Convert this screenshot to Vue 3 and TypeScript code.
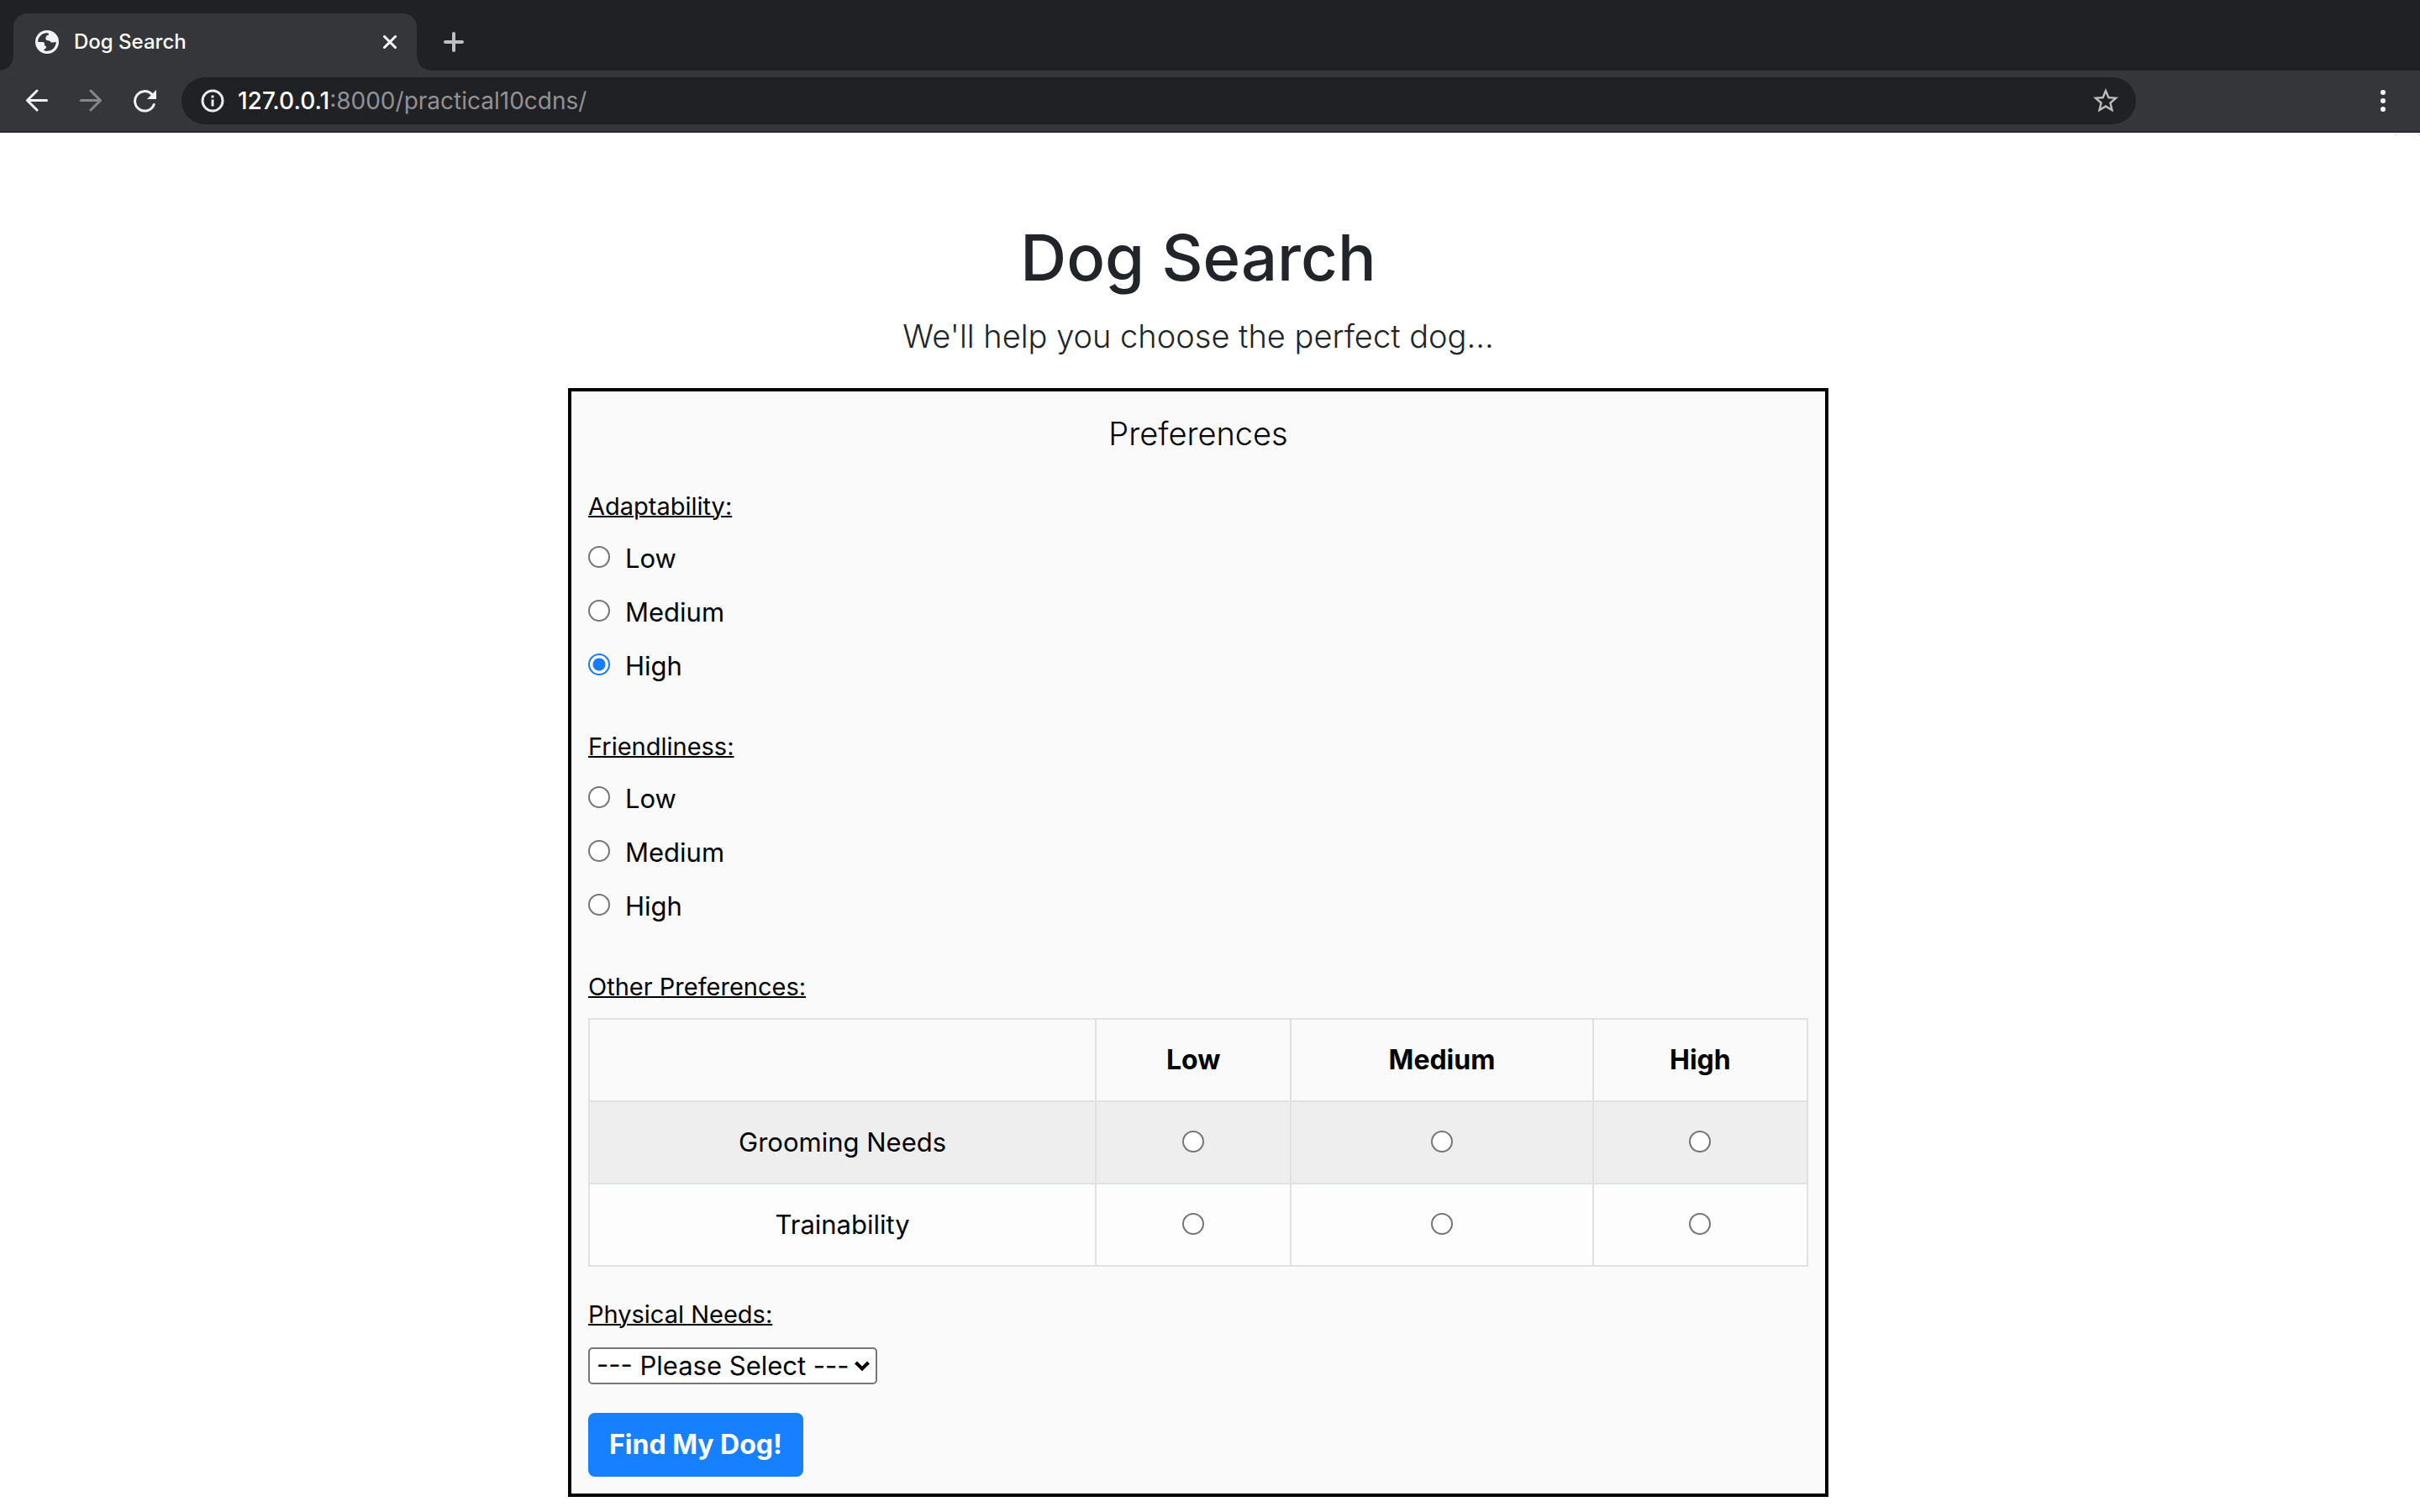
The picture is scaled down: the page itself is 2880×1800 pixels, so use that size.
<script setup lang="ts">
import { ref } from 'vue'

interface RadioGroup {
  name: string
  title: string
}

const levels: string[] = ['Low', 'Medium', 'High']

const groups: RadioGroup[] = [
  { name: 'adaptability', title: 'Adaptability:' },
  { name: 'friendliness', title: 'Friendliness:' },
]

const otherRows: RadioGroup[] = [
  { name: 'grooming', title: 'Grooming Needs' },
  { name: 'trainability', title: 'Trainability' },
]

const answers = ref<Record<string, string>>({
  adaptability: 'High',
  friendliness: '',
  grooming: '',
  trainability: '',
})

const physicalNeeds = ref<string>('')
</script>

<template>
  <div class="window">
    <header class="browser">
      <div class="tab-strip">
        <div class="tab">
          <svg class="favicon" viewBox="0 0 28 28" aria-hidden="true">
            <circle cx="14" cy="14" r="14" fill="#f1f3f4" />
            <path
              d="M3.2 14C3 8 8 3.2 14 3.2C15.500 3.300 16.500 4.300 16 5.200C15 6.200 13 6 12.800 7.800C12.600 9.200 11.800 10 12.800 11.200C14 12.500 16.200 11.800 17.500 13C18.300 14.500 19.500 14.800 21 14.500L24.800 14C24.500 20 20 24.800 14 24.800C12 24.800 10.200 24.500 10.300 23.500C10.500 22 13 22.300 13 20.500C13 19 13 18.600 11.600 18.500C10.300 18.200 11.300 16.500 11 15.500C10.500 14 9 14 8 14Z"
              fill="#35363a"
            />
          </svg>
          <span class="tab-title">Dog Search</span>
          <button class="icon-button tab-close" type="button" aria-label="Close tab">
            <svg width="16" height="16" viewBox="0 0 16 16">
              <path d="M1.500 1.500L14.500 14.500M14.500 1.500L1.500 14.500" stroke="#fff" stroke-width="3" stroke-linecap="round" />
            </svg>
          </button>
        </div>
        <button class="icon-button new-tab" type="button" aria-label="New tab">
          <svg width="24" height="24" viewBox="0 0 24 24">
            <path d="M12 2V22M2 12H22" stroke="#bdc1c6" stroke-width="4" stroke-linecap="round" />
          </svg>
        </button>
      </div>

      <div class="toolbar">
        <button class="icon-button nav" type="button" aria-label="Back">
          <svg width="28" height="28" viewBox="0 0 28 28" fill="none" stroke="#f1f3f4" stroke-width="3" stroke-linecap="round" stroke-linejoin="round">
            <path d="M25.500 13.500H2.500M14 2L2.500 13.500L14 25" />
          </svg>
        </button>
        <button class="icon-button nav" type="button" aria-label="Forward">
          <svg width="28" height="28" viewBox="0 0 28 28" fill="none" stroke="#86878a" stroke-width="3" stroke-linecap="round" stroke-linejoin="round">
            <path d="M2.500 13.500H25.500M14 2L25.500 13.500L14 25" />
          </svg>
        </button>
        <button class="icon-button nav" type="button" aria-label="Reload">
          <svg width="28" height="28" viewBox="0 0 28 28">
            <path d="M25.200 18.500A11.700 11.700 0 1 1 22.500 6" fill="none" stroke="#f1f3f4" stroke-width="3" stroke-linecap="round" />
            <path d="M28 1V12H17Z" fill="#f1f3f4" />
          </svg>
        </button>
        <div class="address">
          <svg width="28" height="28" viewBox="0 0 28 28" aria-hidden="true">
            <circle cx="14" cy="14" r="12" fill="none" stroke="#e8eaed" stroke-width="3" />
            <path d="M12.500 7.500H15.500V10.500H12.500ZM12.500 12.500H15.500V20.500H12.500Z" fill="#e8eaed" />
          </svg>
          <span class="url"><span class="host">127.0.0.1</span>:8000/practical10cdns/</span>
          <button class="icon-button" type="button" aria-label="Bookmark this page">
            <svg width="36" height="36" viewBox="0 0 24 24">
              <path
                d="M22 9.240l-7.190-.620L12 2 9.190 8.630 2 9.240l5.460 4.730L5.820 21 12 17.270 18.180 21l-1.630-7.030L22 9.240zM12 15.400l-3.760 2.270 1-4.280-3.320-2.880 4.380-.380L12 6.100l1.710 4.040 4.380.380-3.320 2.880 1 4.280L12 15.400z"
                fill="#bdbdbd"
              />
            </svg>
          </button>
        </div>
        <button class="icon-button nav" type="button" aria-label="Browser menu">
          <svg width="8" height="28" viewBox="0 0 8 28" fill="#f1f3f4">
            <circle cx="4" cy="4" r="3" />
            <circle cx="4" cy="14" r="3" />
            <circle cx="4" cy="24" r="3" />
          </svg>
        </button>
      </div>
    </header>

    <div class="viewport">
      <main class="page">
        <h1>Dog Search</h1>
        <p class="lead">We'll help you choose the perfect dog...</p>

        <form class="card" @submit.prevent>
          <h2>Preferences</h2>

          <fieldset v-for="group in groups" :key="group.name" class="group">
            <legend class="caption">{{ group.title }}</legend>
            <div class="options">
              <label v-for="level in levels" :key="level" class="option">
                <input v-model="answers[group.name]" class="radio" type="radio" :name="group.name" :value="level" />
                <span>{{ level }}</span>
              </label>
            </div>
          </fieldset>

          <div id="other-title" class="caption">Other Preferences:</div>
          <table aria-labelledby="other-title">
            <colgroup>
              <col class="col-need" />
              <col class="col-low" />
              <col class="col-medium" />
              <col class="col-high" />
            </colgroup>
            <thead>
              <tr>
                <td></td>
                <th v-for="level in levels" :key="level" scope="col">{{ level }}</th>
              </tr>
            </thead>
            <tbody>
              <tr v-for="row in otherRows" :key="row.name">
                <td>{{ row.title }}</td>
                <td v-for="level in levels" :key="level">
                  <input
                    v-model="answers[row.name]"
                    class="radio"
                    type="radio"
                    :name="row.name"
                    :value="level"
                    :aria-label="`${row.title}: ${level}`"
                  />
                </td>
              </tr>
            </tbody>
          </table>

          <label class="caption" for="physical">Physical Needs:</label>
          <div class="select-box">
            <select id="physical" v-model="physicalNeeds">
              <option value="">--- Please Select ---</option>
              <option v-for="level in levels" :key="level" :value="level">{{ level }}</option>
            </select>
            <svg class="chevron" width="20" height="14" viewBox="0 0 20 14" aria-hidden="true">
              <path d="M2.500 3L10 10.500L17.500 3" fill="none" stroke="#000" stroke-width="4" />
            </svg>
          </div>

          <button class="submit" type="submit">Find My Dog!</button>
        </form>
      </main>
      <div class="scroll-edge"></div>
    </div>
  </div>
</template>

<style>
body {
  margin: 0;
  background: #fff;
}
</style>

<style scoped>
.window {
  font-family: Inter, 'Liberation Sans', sans-serif;
  font-size: 31px;
  line-height: 48px;
  color: #000;
}

.window *,
.window *::before,
.window *::after {
  box-sizing: border-box;
}

svg {
  display: block;
  flex: none;
}

.icon-button {
  display: flex;
  align-items: center;
  justify-content: center;
  padding: 0;
  border: 0;
  background: none;
}

/* Browser chrome */
.browser {
  background: #35363a;
  border-bottom: 2px solid #28292c;
}

.tab-strip {
  display: flex;
  height: 84px;
  padding: 16px 16px 0;
  background: #202124;
}

.tab {
  position: relative;
  display: flex;
  align-items: center;
  width: 480px;
  padding: 0 24px 0 26px;
  border-radius: 16px 16px 0 0;
  background: #35363a;
}

.tab::before,
.tab::after {
  content: '';
  position: absolute;
  bottom: 0;
  width: 16px;
  height: 16px;
}

.tab::before {
  right: 100%;
  background: radial-gradient(circle at 0 0, #202124 15px, #35363a 16px);
}

.tab::after {
  left: 100%;
  background: radial-gradient(circle at 100% 0, #202124 15px, #35363a 16px);
}

.favicon {
  width: 28px;
  height: 28px;
}

.tab-title {
  flex: 1;
  margin-left: 18px;
  font-size: 24px;
  font-weight: 500;
  color: #fff;
}

.new-tab {
  margin-left: 32px;
}

.toolbar {
  display: flex;
  align-items: center;
  height: 72px;
  padding: 0 12px;
}

.nav {
  width: 64px;
  height: 56px;
}

.address {
  display: flex;
  flex: 1;
  align-items: center;
  height: 56px;
  margin: 0 262px 0 12px;
  padding: 0 18px 0 23px;
  border-radius: 28px;
  background: #202124;
}

.url {
  flex: 1;
  margin-left: 16px;
  font-size: 28px;
  color: #919294;
}

.host {
  font-weight: 500;
  color: #fff;
}

/* Page */
.viewport {
  display: grid;
  grid-template-columns: 1fr 30px;
  align-items: start;
}

.scroll-edge {
  height: 4px;
  border: solid #e8e8e8;
  border-width: 0 2px;
  background: #fafafa;
}

.page {
  padding: 100px 18px 18px 20px;
}

h1 {
  margin: 0 0 16px;
  font-size: 76px;
  font-weight: 500;
  line-height: 96px;
  text-align: center;
  color: #212529;
}

.lead {
  margin: 0 0 32px;
  font-size: 38px;
  font-weight: 300;
  line-height: 60px;
  text-align: center;
  color: #212529;
}

.card {
  max-width: 1500px;
  margin: 0 auto;
  padding: 20px;
  border: 4px solid #000;
  background: #fafafa;
}

h2 {
  margin: 0 0 35px;
  font-size: 38px;
  font-weight: 300;
  line-height: 60px;
  text-align: center;
}

.group {
  min-width: 0;
  margin: 0 0 42px;
  padding: 0;
  border: 0;
}

.caption {
  display: block;
  padding: 0;
  font-size: 29px;
  line-height: 44px;
  text-decoration: underline 2px;
}

.options {
  padding-top: 8px;
}

.option {
  display: flex;
  align-items: center;
  gap: 18px;
  height: 64px;
}

.radio {
  appearance: none;
  display: inline-block;
  width: 26px;
  height: 26px;
  margin: 0 0 4px;
  border: 2px solid #767676;
  border-radius: 50%;
  background: #fff;
}

.radio:checked {
  border-color: #177dff;
  background: radial-gradient(circle, #177dff 7px, #fff 8px);
}

table {
  width: 100%;
  margin: 15px 0 35px;
  border-collapse: collapse;
  table-layout: fixed;
}

.col-need {
  width: 41.6%;
}

.col-low {
  width: 16%;
}

.col-medium {
  width: 24.8%;
}

.col-high {
  width: 17.6%;
}

th,
td {
  height: 98px;
  padding: 0 24px;
  border: 2px solid #dee2e6;
  text-align: center;
  vertical-align: middle;
}

th {
  font-size: 32px;
  font-weight: 700;
}

td .radio {
  display: block;
  margin: 0 auto 2px;
}

tbody tr {
  background: #fdfdfd;
}

tbody tr:nth-child(odd) {
  background: #eee;
}

.select-box {
  display: grid;
  width: fit-content;
  margin: 17px 0 34px;
  align-items: center;
}

.select-box > * {
  grid-area: 1 / 1;
}

select {
  appearance: none;
  width: 344px;
  height: 44px;
  padding: 0 0 0 8px;
  border: 2px solid #767676;
  border-radius: 5px;
  background: #fff;
  font: inherit;
  line-height: 40px;
  color: #000;
}

.chevron {
  justify-self: end;
  margin-right: 8px;
  pointer-events: none;
}

.submit {
  display: block;
  height: 76px;
  padding: 0 25px;
  border: 0;
  border-radius: 8px;
  background: #1680ff;
  font: inherit;
  font-size: 32px;
  font-weight: 700;
  color: #fff;
}
</style>
